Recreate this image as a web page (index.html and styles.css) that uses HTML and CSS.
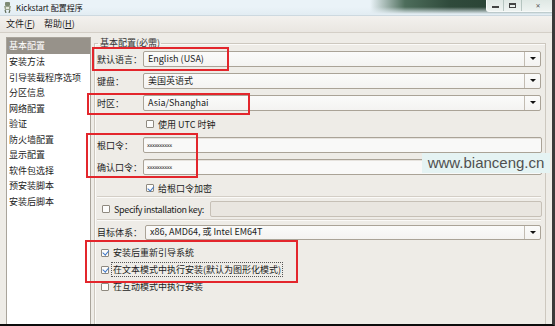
FILE: index.html
```html
<!DOCTYPE html>
<html lang="zh-CN">
<head>
    <meta charset="UTF-8">
    <meta name="viewport" content="width=device-width, initial-scale=1.0">
    <title>Kickstart 配置程序</title>
    <link rel="stylesheet" href="styles.css">
</head>
<body>
<div class="window">
    <div class="titlebar">
        <svg class="app-icon" width="9" height="11" viewBox="0 0 9 11">
            <rect x="2" y="0" width="5" height="4" rx="1" fill="#7c8a74"/>
            <path d="M1 4 L8 4 L7 8 L2 8 Z" fill="#9aa58f"/>
            <path d="M2 8 L3 11 M7 8 L6 11" stroke="#5f6b58" stroke-width="1.2"/>
            <rect x="3" y="5" width="3" height="2" fill="#e4e8dc"/>
        </svg>
        <span class="title">Kickstart 配置程序</span>
        <div class="controls">
            <span class="ctl"><i class="min"></i></span>
            <span class="ctl"><i class="max"></i></span>
            <span class="ctl close">✕</span>
        </div>
    </div>

    <div class="menubar">
        <span class="menu">文件(<u>F</u>)</span>
        <span class="menu">帮助(<u>H</u>)</span>
    </div>

    <div class="main">
        <ul class="sidebar">
            <li class="selected">基本配置</li>
            <li>安装方法</li>
            <li>引导装载程序选项</li>
            <li>分区信息</li>
            <li>网络配置</li>
            <li>验证</li>
            <li>防火墙配置</li>
            <li>显示配置</li>
            <li>软件包选择</li>
            <li>预安装脚本</li>
            <li>安装后脚本</li>
        </ul>

        <fieldset class="frame">
            <legend>基本配置(必需)</legend>

            <div class="row first">
                <span class="label">默认语言：</span>
                <div class="combo"><span class="value">English (USA)</span><span class="arrow"></span></div>
            </div>
            <div class="row">
                <span class="label">键盘：</span>
                <div class="combo"><span class="value">美国英语式</span><span class="arrow"></span></div>
            </div>
            <div class="row">
                <span class="label">时区：</span>
                <div class="combo"><span class="value">Asia/Shanghai</span><span class="arrow"></span></div>
            </div>
            <div class="row check-row indent">
                <span class="box"></span><span>使用 UTC 时钟</span>
            </div>
            <div class="row">
                <span class="label">根口令：</span>
                <div class="entry"><span class="secret">xxxxxxxxxx</span></div>
            </div>
            <div class="row">
                <span class="label">确认口令：</span>
                <div class="entry"><span class="secret">xxxxxxxxxx</span></div>
            </div>
            <div class="row check-row indent">
                <span class="box checked"></span><span>给根口令加密</span>
            </div>

            <div class="sep"></div>

            <div class="row key-row">
                <span class="box"></span><span class="key-label">Specify installation key:</span>
                <div class="entry disabled"></div>
            </div>

            <div class="sep second"></div>

            <div class="row arch-row">
                <span class="label wide">目标体系：</span>
                <div class="combo"><span class="value">x86, AMD64, 或 Intel EM64T</span><span class="arrow"></span></div>
            </div>

            <div class="options">
                <div class="option"><span class="box checked"></span><span>安装后重新引导系统</span></div>
                <div class="option"><span class="box checked"></span><span class="focus">在文本模式中执行安装(默认为图形化模式)</span></div>
                <div class="option"><span class="box"></span><span>在互动模式中执行安装</span></div>
            </div>
        </fieldset>
    </div>

    <div class="mark mark-lang"></div>
    <div class="mark mark-zone"></div>
    <div class="mark mark-pass"></div>
    <div class="mark mark-opts"></div>

    <div class="watermark">www.bianceng.cn</div>
</div>
</body>
</html>
```

FILE: styles.css
```css
*{
    margin: 0;
    padding: 0;
    box-sizing: border-box;
}
body{
    font-family: "Noto Sans CJK SC", "DejaVu Sans", sans-serif;
    font-size: 9px;
    color: #1c1c1c;
    background: #2b2b2b;
}
.window{
    position: relative;
    width: 555px;
    height: 326px;
    background: #eeece7;
    border-right: 3px solid #3a3a3a;
    border-bottom: 2px solid #0c0c0c;
    display: flex;
    flex-direction: column;
    overflow: hidden;
}

/* title bar */
.titlebar{
    height: 16px;
    display: flex;
    align-items: center;
    padding-left: 3px;
    background:
        linear-gradient(to bottom, rgba(226, 237, 244, 0) 0, rgba(226, 237, 244, 0) 7px, #e3edf3 14px),
        linear-gradient(to right, #eaf3f8 0, #eaf3f8 370px, #4d6d5b 405px, #2f4a3b 450px, #2b4436 490px, #3c5a4a 552px);
    border-bottom: 1px solid #cdd9e0;
    margin-right: -3px;
}
.app-icon{
    display: block;
    margin-right: 4px;
}
.title{
    font-size: 8px;
    line-height: 12px;
    color: #111;
}
.controls{
    margin-left: auto;
    align-self: flex-start;
    height: 12px;
    display: flex;
    border: 1px solid rgba(255, 255, 255, .75);
    border-top: 0;
    border-radius: 0 0 3px 3px;
    background: linear-gradient(#dfe8e4, #eef3f1);
}
.ctl{
    width: 17px;
    display: flex;
    align-items: center;
    justify-content: center;
    border-right: 1px solid rgba(150, 170, 165, .6);
}
.ctl:nth-child(2){
    width: 18px;
}
.ctl.close{
    width: 32px;
    border-right: 0;
    font-family: "DejaVu Sans", sans-serif;
    font-size: 6px;
    font-weight: bold;
    color: #555;
}
.min{
    width: 7px;
    height: 2px;
    margin-top: 3px;
    background: #444;
}
.max{
    width: 7px;
    height: 5px;
    border: 1px solid #444;
    border-top-width: 2px;
}

/* menu bar */
.menubar{
    height: 17px;
    display: flex;
    align-items: center;
    gap: 9px;
    padding-left: 6px;
    background: linear-gradient(#f3f1ee, #e9e6e1);
    border-bottom: 1px solid #d4cfc7;
}
.menu{
    line-height: 12px;
}
.menu u{
    text-decoration-thickness: 1px;
    text-underline-offset: 1px;
}

/* body */
.main{
    flex: 1;
    display: flex;
    padding: 4px 0 0 6px;
    min-height: 0;
}
.sidebar{
    list-style: none;
    width: 85px;
    background: #fff;
    border: 1px solid #a9a49b;
    border-bottom: 0;
}
.sidebar li{
    height: 15.5px;
    line-height: 15.5px;
    padding-left: 2px;
    white-space: nowrap;
}
.sidebar li.selected{
    height: 16px;
    line-height: 15px;
    background: #97928a;
    color: #fff;
}

.frame{
    flex: 1;
    margin: 0 6px 0 3px;
    border: 1px solid #cdc8bf;
    border-bottom: 0;
    box-shadow: inset 1px 1px 0 #fbfaf8;
    padding: 0 4px 0 2px;
    min-width: 0;
}
.frame legend{
    font-size: 9px;
    line-height: 10px;
    padding: 1px 1px 2px 2px;
    margin-left: 1px;
    color: #333;
}

.row{
    display: flex;
    align-items: center;
    height: 16px;
    margin-top: 6px;
}
.row.first{
    margin-top: 1px;
}
.label{
    width: 46px;
    flex: none;
    white-space: nowrap;
}
.label.wide{
    width: 48px;
}
.combo, .entry{
    flex: 1;
    height: 16px;
    display: flex;
    align-items: center;
    background: #f9f9f8;
    border: 1px solid #aaa397;
    border-radius: 2px;
    box-shadow: inset 0 1px 0 #e6e3de;
}
.combo{
    box-shadow: none;
    background: linear-gradient(#fbfbfa, #f4f3f1);
}
.value{
    flex: 1;
    padding-left: 4px;
    line-height: 14px;
    white-space: nowrap;
}
.arrow{
    width: 16px;
    height: 100%;
    border-left: 1px solid #c2bcb2;
    position: relative;
}
.arrow::after{
    content: "";
    position: absolute;
    left: 5px;
    top: 5px;
    border-left: 3px solid transparent;
    border-right: 3px solid transparent;
    border-top: 3px solid #111;
}
.entry{
    margin-right: -1px;
}
.secret{
    padding-left: 3px;
    font-family: "DejaVu Sans", sans-serif;
    font-size: 5px;
    letter-spacing: -0.5px;
    line-height: 10px;
    color: #222;
}
.entry.disabled{
    background: #e9e6e0;
    border-color: #c6c0b6;
    box-shadow: none;
    margin-left: 6px;
}

.check-row{
    height: 14px;
}
.indent{
    padding-left: 49px;
}
.box{
    width: 8px;
    height: 8px;
    flex: none;
    margin-right: 4px;
    background: #fcfcfb;
    border: 1px solid #8e897f;
    border-radius: 1px;
    position: relative;
}
.box.checked::after{
    content: "";
    position: absolute;
    left: 1.5px;
    top: -0.5px;
    width: 2.5px;
    height: 4.5px;
    border-right: 1.5px solid #3f78c6;
    border-bottom: 1.5px solid #3f78c6;
    transform: rotate(40deg);
}

.sep{
    margin-top: 1px;
    border-top: 1px solid #d3cec6;
    border-bottom: 1px solid #fbfaf8;
}
.sep.second{
    margin-top: 2px;
}
.key-row{
    margin-top: 3px;
    padding-left: 5px;
}
.key-label{
    white-space: nowrap;
    letter-spacing: -0.35px;
}
.arch-row{
    margin-top: 3px;
}
.arch-row .combo{
    height: 15px;
}

.options{
    margin-top: 4px;
    padding-left: 4px;
}
.option{
    height: 17px;
    display: flex;
    align-items: center;
}
.focus{
    outline: 1px dotted #555;
    outline-offset: 0;
    padding: 0 1px;
    margin-left: -1px;
    line-height: 13px;
}

/* annotations laid over the screenshot */
.mark{
    position: absolute;
    border: 2px solid #e3262c;
}
.mark-lang{
    left: 92px;
    top: 47px;
    width: 137px;
    height: 24px;
}
.mark-zone{
    left: 87px;
    top: 93px;
    width: 163px;
    height: 22px;
}
.mark-pass{
    left: 86px;
    top: 133px;
    width: 112px;
    height: 45px;
}
.mark-opts{
    left: 85px;
    top: 240px;
    width: 213px;
    height: 43px;
}
.watermark{
    position: absolute;
    left: 422px;
    top: 153px;
    width: 128px;
    height: 20px;
    background: #e5f3f3;
    color: #505050;
    font-family: "Liberation Sans", sans-serif;
    font-size: 15px;
    line-height: 20px;
    text-align: center;
}
```
